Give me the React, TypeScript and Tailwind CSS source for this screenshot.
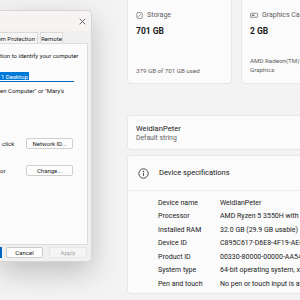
import React from 'react';

// Settings > About page with the System Properties dialog on top

const specs = [
  { label: 'Device name', value: 'WeidianPeter' },
  { label: 'Processor', value: 'AMD Ryzen 5 3550H with Radeon Vega Mobile Gfx' },
  { label: 'Installed RAM', value: '32.0 GB (29.9 GB usable)' },
  { label: 'Device ID', value: 'C895C617-D6E8-4F19-AE62-1B7A2C0D41F3' },
  { label: 'Product ID', value: '00330-80000-00000-AA545' },
  { label: 'System type', value: '64-bit operating system, x64-based processor' },
  { label: 'Pen and touch', value: 'No pen or touch input is available for this display' },
];

const StorageIcon = () => (
  <svg width="7" height="7" viewBox="0 0 16 16" fill="none" stroke="#6b6b6b" strokeWidth="1.6">
    <rect x="2" y="1.5" width="12" height="13" rx="1.5" />
    <path d="M5 11l6-6" />
  </svg>
);

const GpuIcon = () => (
  <svg width="8" height="7" viewBox="0 0 18 14" fill="none" stroke="#6b6b6b" strokeWidth="1.6">
    <rect x="1" y="2" width="16" height="9" rx="1.5" />
    <rect x="4" y="5" width="6" height="3" fill="#6b6b6b" stroke="none" />
    <path d="M3 11v2" />
  </svg>
);

const InfoIcon = () => (
  <svg width="11" height="11" viewBox="0 0 16 16" fill="none" stroke="#1a1a1a" strokeWidth="1.1">
    <circle cx="8" cy="8" r="6.8" />
    <path d="M8 7v4.5" />
    <circle cx="8" cy="4.8" r="0.5" fill="#1a1a1a" />
  </svg>
);

const SystemDialog: React.FC = () => (
  <div className="absolute left-0 top-[10px] w-[92px] h-[252px] bg-[#f0f0f0] rounded-r-[5px] border border-l-0 border-[#d6d6d6] shadow-[0_10px_28px_rgba(0,0,0,0.22)] flex flex-col overflow-hidden">
    {/* title bar */}
    <div className="h-[20px] bg-[#f7f3f3] flex items-center justify-end pr-[5px]">
      <svg width="7" height="7" viewBox="0 0 10 10" stroke="#333" strokeWidth="1">
        <path d="M1 1l8 8M9 1l-8 8" />
      </svg>
    </div>
    {/* tabs */}
    <div className="h-[12px] flex items-end gap-[2px] text-[6px] text-[#1a1a1a] whitespace-nowrap">
      <div className="h-[11px] w-[38px] flex items-center justify-end pr-[2px] border border-l-0 border-b-0 border-[#dadada] bg-[#f5f5f5] overflow-hidden">em Protection</div>
      <div className="h-[11px] w-[23px] flex items-center justify-center border border-b-0 border-[#dadada] bg-[#f5f5f5]">Remote</div>
    </div>
    {/* tab page */}
    <div className="h-[202px] mr-[3px] bg-[#fbfbfb] border border-l-0 border-[#dcdcdc] flex flex-col text-[6px] text-[#1a1a1a]">
      <div className="mt-[7px] whitespace-nowrap">tion to identify your computer</div>
      <div className="mt-[12px] w-[74px] h-[10px] border-b border-[#0067c0] flex items-start">
        <span className="bg-[#0078d7] text-white px-[1px] h-[8px] flex items-center whitespace-nowrap">1 Desktop</span>
      </div>
      <div className="mt-[4px] whitespace-nowrap">en Computer" or "Mary's</div>
      <div className="mt-[43px] flex items-center">
        <span className="w-[26px] pl-[2px]">click</span>
        <span className="w-[47px] h-[11px] flex items-center justify-center bg-[#fdfdfd] border border-[#cfcfcf] rounded-[2px] whitespace-nowrap">Network ID...</span>
      </div>
      <div className="mt-[16px] flex items-center">
        <span className="w-[26px]">or</span>
        <span className="w-[47px] h-[11px] flex items-center justify-center bg-[#fdfdfd] border border-[#cfcfcf] rounded-[2px]">Change...</span>
      </div>
    </div>
    {/* buttons */}
    <div className="mt-[2px] h-[11px] flex items-center text-[6px]">
      <span className="w-[2px] h-[11px] bg-[#0067c0]" />
      <span className="ml-[4px] w-[37px] h-[11px] flex items-center justify-center bg-[#fdfdfd] border border-[#cccccc] rounded-[2px] text-[#1a1a1a]">Cancel</span>
      <span className="ml-[6px] w-[38px] h-[11px] flex items-center justify-center bg-[#f5f5f5] border border-[#e6e6e6] rounded-[2px] text-[#a3a3a3]">Apply</span>
    </div>
  </div>
);

export default function App() {
  return (
    <div className="relative w-[300px] h-[300px] overflow-hidden bg-[#f3f3f3]" style={{ fontFamily: 'Roboto, "Liberation Sans", sans-serif' }}>
      <div className="pl-[127px] flex flex-col">
        {/* top cards */}
        <div className="flex gap-[9px] -mt-[6px]">
          <div className="w-[105px] h-[90px] shrink-0 bg-[#fbfbfb] border border-[#e8e8e8] rounded-[4px] px-[8px] pt-[15px] flex flex-col">
            <div className="flex items-center gap-[4px] text-[7px] text-[#616161]">
              <StorageIcon />
              <span>Storage</span>
            </div>
            <div className="mt-[4px] text-[8.5px] font-bold text-[#1a1a1a]">701 GB</div>
            <div className="mt-auto mb-[7px] text-[6.2px] text-[#616161] whitespace-nowrap">379 GB of 701 GB used</div>
          </div>
          <div className="w-[105px] h-[90px] shrink-0 bg-[#fbfbfb] border border-[#e8e8e8] rounded-[4px] px-[8px] pt-[15px] flex flex-col">
            <div className="flex items-center gap-[4px] text-[7px] text-[#616161] whitespace-nowrap">
              <GpuIcon />
              <span>Graphics Card</span>
            </div>
            <div className="mt-[4px] text-[8.5px] font-bold text-[#1a1a1a]">2 GB</div>
            <div className="mt-auto mb-[8px] text-[6.2px] leading-[9px] text-[#616161]">AMD Radeon(TM)<br />Graphics</div>
          </div>
        </div>

        {/* device name */}
        <div className="mt-[31px] h-[35px] bg-[#fbfbfb] border border-[#e8e8e8] border-r-0 rounded-l-[4px] px-[8px] flex flex-col justify-center">
          <div className="text-[7.6px] text-[#1a1a1a] leading-[11px]">WeidianPeter</div>
          <div className="text-[6.8px] text-[#616161] leading-[9px]">Default string</div>
        </div>

        {/* device specifications */}
        <div className="mt-[5px] h-[139px] bg-[#fbfbfb] border border-[#e8e8e8] border-r-0 rounded-l-[4px] flex flex-col">
          <div className="h-[35px] border-b border-[#ececec] flex items-center pl-[10px] gap-[10px]">
            <InfoIcon />
            <span className="text-[7.5px] text-[#1a1a1a] whitespace-nowrap">Device specifications</span>
          </div>
          <div className="pt-[5px] flex flex-col">
            {specs.map((s) => (
              <div key={s.label} className="h-[13.5px] flex items-center pl-[30px] text-[7px] text-[#1a1a1a] whitespace-nowrap">
                <span className="w-[62px] shrink-0">{s.label}</span>
                <span>{s.value}</span>
              </div>
            ))}
          </div>
        </div>
      </div>

      <SystemDialog />
    </div>
  );
}
